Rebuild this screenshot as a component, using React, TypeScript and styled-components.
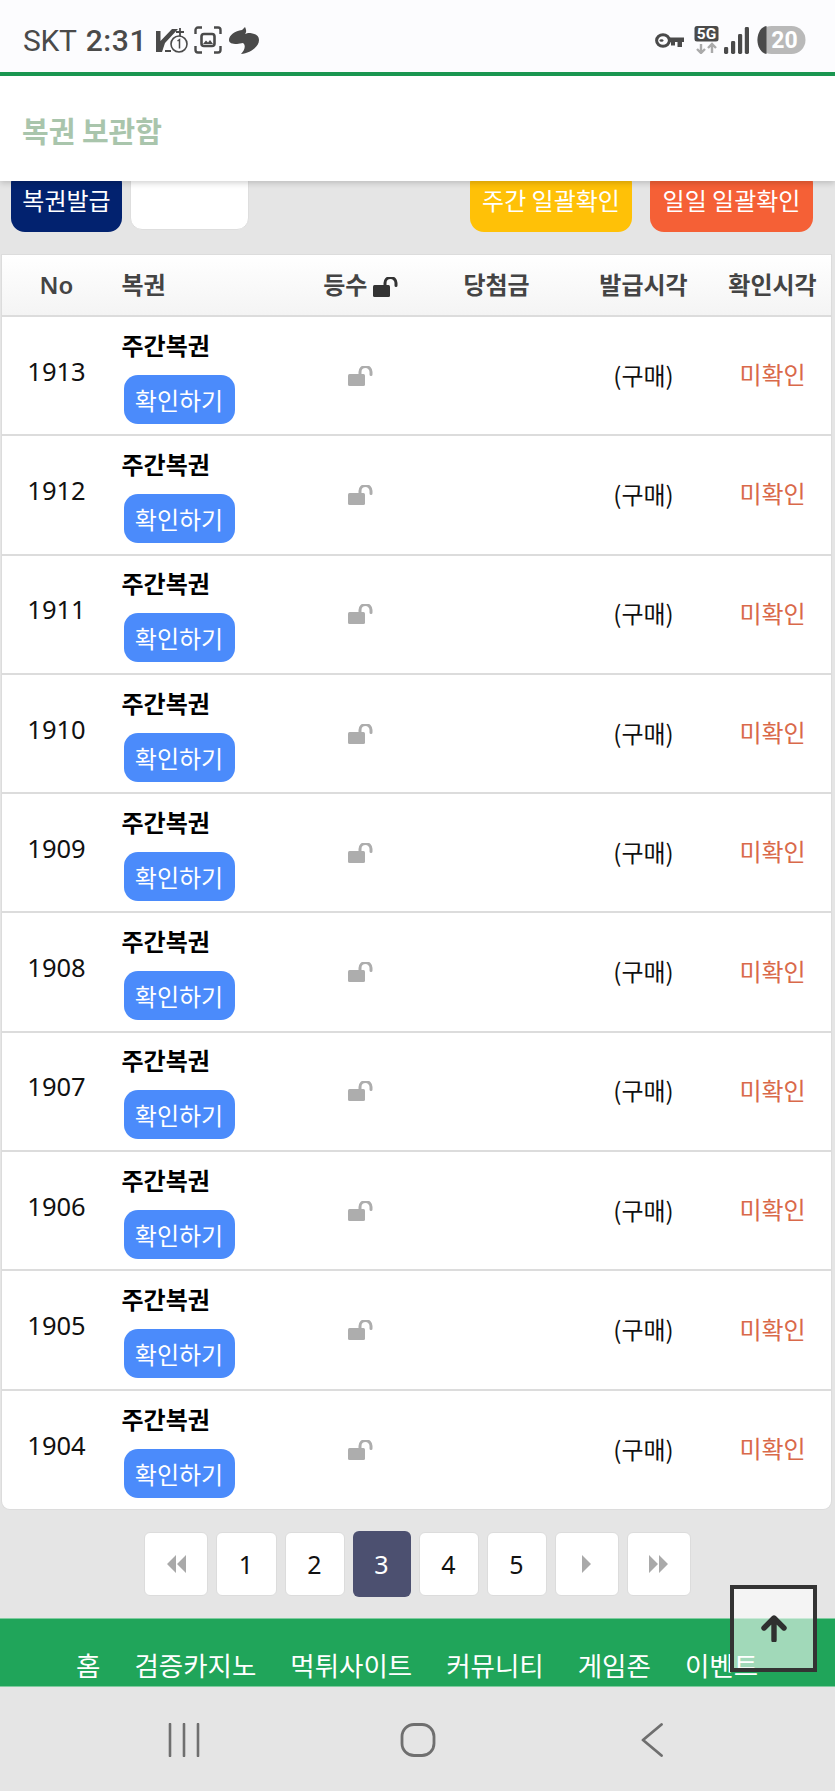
import React from "react";
import styled, { createGlobalStyle } from "styled-components";

const Global = createGlobalStyle`
  html, body { margin: 0; padding: 0; background: #e5e5e5; }
  body { font-family: "Noto Sans", "Noto Sans CJK KR", sans-serif; }
  * { box-sizing: border-box; }
`;

const Page = styled.div`
  position: relative;
  width: 835px;
  height: 1791px;
  overflow: hidden;
  background: #e5e5e5;
  display: flex;
  flex-direction: column;
`;

const StatusBar = styled.div`
  height: 76px;
  flex: none;
  background: #fcfcfe;
  border-bottom: 4px solid #1a9650;
  padding: 8px 29px 0 23px;
  display: flex;
  align-items: center;
  justify-content: space-between;
  color: #4a4a4a;
  position: relative;
  z-index: 3;
`;

const StatusLeft = styled.div`
  display: flex;
  align-items: center;
`;

const StatusRight = styled.div`
  display: flex;
  align-items: center;
`;

const Carrier = styled.span`
  font: 400 30px "Roboto", sans-serif;
  letter-spacing: -0.3px;
  margin-right: 9px;
`;

const Clock = styled.span`
  font: 500 30px "Roboto", sans-serif;
  letter-spacing: 0.6px;
  margin-right: 9px;
`;

const AppHeader = styled.header`
  height: 105px;
  flex: none;
  background: #fff;
  box-shadow: 0 2px 6px rgba(0, 0, 0, 0.18);
  padding-left: 22px;
  display: flex;
  align-items: center;
  position: relative;
  z-index: 2;
`;

const Title = styled.h1`
  margin: 2px 0 0;
  font: 700 29px "Noto Sans CJK KR", sans-serif;
  color: #a9c5ac;
`;

const Toolbar = styled.div`
  display: flex;
  margin-top: -12px;
  padding: 0 22px 0 11px;
  align-items: flex-start;
`;

const ToolButton = styled.div<{ $bg: string; $w: number; $ml?: number }>`
  width: ${(p) => p.$w}px;
  height: 63px;
  margin-left: ${(p) => p.$ml ?? 0}px;
  padding-bottom: 3px;
  background: ${(p) => p.$bg};
  border-radius: 14px;
  color: #fff;
  font: 400 24px "Noto Sans CJK KR", sans-serif;
  display: flex;
  align-items: center;
  justify-content: center;
`;

const BlankInput = styled.div`
  width: 119px;
  height: 61px;
  margin-left: 8px;
  background: #fff;
  border: 1px solid #dedede;
  border-radius: 12px;
`;

const Table = styled.table`
  width: 829px;
  margin: 23px 0 0 1.5px;
  flex: none;
  table-layout: fixed;
  border-collapse: separate;
  border-spacing: 0;
  background: #fff;
  border-radius: 0 0 8px 8px;
  box-shadow: 0 0 0 1px #dcdcdc;
`;

const HeadCell = styled.th<{ $w: number; $left?: boolean }>`
  width: ${(p) => p.$w}px;
  height: 62px;
  padding: 0 0 3px ${(p) => (p.$left ? "10px" : "0")};
  text-align: ${(p) => (p.$left ? "left" : "center")};
  font: 700 24px "Noto Sans CJK KR", sans-serif;
  color: #444;
  background: linear-gradient(#fff, #f4f4f4);
  border-bottom: 2px solid #dcdcdc;
`;

const NoHead = styled.span`
  font: 600 24px "Noto Sans", sans-serif;
`;

const Cell = styled.td<{ $left?: boolean; $last?: boolean; $pb?: number; $pt?: number }>`
  height: ${(p) => (p.$last ? 118 : 119.3)}px;
  padding: ${(p) => p.$pt ?? 0}px 0 ${(p) => p.$pb ?? 0}px ${(p) => (p.$left ? "10px" : "0")};
  text-align: ${(p) => (p.$left ? "left" : "center")};
  vertical-align: middle;
  border-bottom: ${(p) => (p.$last ? "none" : "2px solid #dcdcdc")};
  font: 400 24px "Noto Sans CJK KR", sans-serif;
  color: #111;
`;

const NoText = styled.span`
  font: 400 25.5px "Noto Sans", sans-serif;
`;

const TicketName = styled.div`
  font: 700 24px "Noto Sans CJK KR", sans-serif;
  color: #000;
  line-height: 30px;
  margin: -2px 0 15px;
`;

const CheckButton = styled.div`
  width: 111px;
  height: 49px;
  margin-left: 2px;
  border-radius: 14px;
  background: #4b8bfb;
  color: #fff;
  font: 400 24px "Noto Sans CJK KR", sans-serif;
  display: flex;
  align-items: center;
  justify-content: center;
`;

const Unchecked = styled.span`
  color: #d9694a;
`;

const Pager = styled.nav`
  display: flex;
  align-items: center;
  justify-content: center;
  gap: 8px;
  margin: 22px 0 0 -1px;
  height: 66px;
  flex: none;
`;

const PageButton = styled.div<{ $w: number; $active?: boolean }>`
  width: ${(p) => p.$w}px;
  height: ${(p) => (p.$active ? 66 : 64)}px;
  background: ${(p) => (p.$active ? "#4c5070" : "#fff")};
  color: ${(p) => (p.$active ? "#fff" : "#111")};
  border: ${(p) => (p.$active ? "none" : "1px solid #dcdcdc")};
  border-radius: 6px;
  font: 400 25px "Noto Sans", sans-serif;
  display: flex;
  align-items: center;
  justify-content: center;
`;

const FooterNav = styled.footer`
  height: 69px;
  margin-top: 21px;
  flex: none;
  background: #20a55a;
  border-top: 1px solid #7fcb9f;
  border-bottom: 1px solid #7fcb9f;
  padding: 26px 0 0 76px;
  display: flex;
  gap: 34px;
  color: #fff;
  font: 400 26.5px/40px "Noto Sans CJK KR", sans-serif;
  white-space: nowrap;
  overflow: hidden;
`;

const TopButton = styled.div`
  position: absolute;
  left: 730px;
  top: 1585px;
  width: 87px;
  height: 87px;
  border: 4px solid #333;
  background: rgba(255, 255, 255, 0.58);
  display: flex;
  justify-content: center;
  padding-top: 26px;
`;

const SystemNav = styled.div`
  flex: 1;
  display: grid;
  grid-template-columns: 168px 32px 200px 36px 205px 22px;
  padding-top: 36px;
  align-items: start;
`;

const NavSlot = styled.div<{ $col: number }>`
  grid-column: ${(p) => p.$col};
  display: flex;
`;

const Unlock = ({ size, color }: { size: number; color: string }) => (
  <svg width={size} height={size * 0.8} viewBox="0 0 25 20" style={{ verticalAlign: "middle" }}>
    <rect x="0" y="8" width="17" height="12" rx="1.5" fill={color} />
    <path d="M12 9V6a5.5 5.5 0 0 1 11 0v2.5" fill="none" stroke={color} strokeWidth="3" strokeLinecap="round" />
  </svg>
);

const Tri = ({ dir, double }: { dir: "l" | "r"; double?: boolean }) => (
  <svg width={double ? 20 : 10} height="18" viewBox={double ? "0 0 20 18" : "0 0 10 18"}>
    {dir === "l" ? (
      <path d="M10 0v18L1 9zM20 0v18L11 9z" fill="#a9a9a9" />
    ) : double ? (
      <path d="M0 0v18l9-9zM10 0v18l9-9z" fill="#a9a9a9" />
    ) : (
      <path d="M0 0v18l9-9z" fill="#a9a9a9" />
    )}
  </svg>
);

const rows = [1913, 1912, 1911, 1910, 1909, 1908, 1907, 1906, 1905, 1904];
const menu = ["홈", "검증카지노", "먹튀사이트", "커뮤니티", "게임존", "이벤트"];

export default function App() {
  return (
    <Page>
      <Global />
      <StatusBar>
        <StatusLeft>
          <Carrier>SKT</Carrier>
          <Clock>2:31</Clock>
          <svg width="32" height="25" viewBox="0 0 32 25" style={{ marginRight: 6 }}>
            <path d="M0 3h4.5v10L16 1h6L9 15l-3 9H0z" fill="#4a4a4a" />
            <path d="M24 0v8M20 4h8" stroke="#4a4a4a" strokeWidth="1.8" fill="none" />
            <circle cx="23" cy="16" r="8" fill="#fcfcfe" stroke="#4a4a4a" strokeWidth="1.6" />
            <path d="M21.5 13l2-1.4v9" stroke="#4a4a4a" strokeWidth="1.5" fill="none" />
            <path d="M9 23h6" stroke="#4a4a4a" strokeWidth="2" />
          </svg>
          <svg width="28" height="28" viewBox="0 0 28 28" style={{ marginRight: 7 }}>
            <path d="M1.5 8V4a2.5 2.5 0 0 1 2.5-2.5h4M20 1.5h4A2.5 2.5 0 0 1 26.5 4v4M1.5 20v4A2.5 2.5 0 0 0 4 26.5h4M26.5 20v4a2.5 2.5 0 0 1-2.5 2.5h-4" fill="none" stroke="#4a4a4a" strokeWidth="2.4" />
            <rect x="7.5" y="8" width="13" height="12" rx="2.5" fill="none" stroke="#4a4a4a" strokeWidth="2.6" />
            <path d="M9 18l3-3.5 2 2 2-2.5 3 4z" fill="#4a4a4a" />
          </svg>
          <svg width="30" height="27" viewBox="0 0 30 27">
            <path d="M16 0L13 3C6 4 0 8 0 13c0 3 3 4 8 4l6-1c3 2 2 7-2 11 9-1 18-7 18-14 0-5-5-7-11-7l-3 1c2-2 1-5 0-7z" fill="#4a4a4a" />
          </svg>
        </StatusLeft>
        <StatusRight>
          <svg width="29" height="15" viewBox="0 0 29 15" style={{ marginRight: 10 }}>
            <ellipse cx="8" cy="7.5" rx="6.4" ry="5.8" fill="none" stroke="#4a4a4a" strokeWidth="3" />
            <path d="M13 4.5h16v4.5h-2v5h-4.5V9H20v3.5h-4V9h-3z" fill="#4a4a4a" />
            <ellipse cx="6.5" cy="7.5" rx="2" ry="1.2" fill="#4a4a4a" />
          </svg>
          <svg width="25" height="28" viewBox="0 0 25 28" style={{ marginRight: 5 }}>
            <rect x="0.5" y="0" width="24" height="15.5" rx="2.5" fill="#4a4a4a" />
            <text x="12.5" y="13" textAnchor="middle" fill="#fff" fontFamily="Roboto, sans-serif" fontWeight="700" fontSize="15.5">5G</text>
            <path d="M7 18v9M3 23l4 4 4-4M18 27v-9M14 22l4-4 4 4" fill="none" stroke="#aaa" strokeWidth="2.4" />
          </svg>
          <svg width="25" height="27" viewBox="0 0 25 27" style={{ marginRight: 8 }}>
            <rect x="0" y="20" width="4.2" height="7" rx="1.4" fill="#4a4a4a" />
            <rect x="7" y="14" width="4.2" height="13" rx="1.4" fill="#4a4a4a" />
            <rect x="14" y="7" width="4.2" height="20" rx="1.4" fill="#4a4a4a" />
            <rect x="20.8" y="0" width="4.2" height="27" rx="1.4" fill="#4a4a4a" />
          </svg>
          <svg width="49" height="28" viewBox="0 0 49 28">
            <rect x="0.5" y="0" width="48" height="28" rx="14" fill="#b9b9b9" />
            <path d="M9.5 0v28C4 27 0.5 21 0.5 14S4 1 9.5 0z" fill="#4a4a4a" />
            <text x="27.5" y="22" textAnchor="middle" fill="#fff" fontFamily="Roboto, sans-serif" fontWeight="700" fontSize="23">20</text>
          </svg>
        </StatusRight>
      </StatusBar>
      <AppHeader>
        <Title>복권 보관함</Title>
      </AppHeader>
      <Toolbar>
        <ToolButton $bg="#02226f" $w={111}>복권발급</ToolButton>
        <BlankInput />
        <ToolButton $bg="#ffc107" $w={162} $ml={221}>주간 일괄확인</ToolButton>
        <ToolButton $bg="#f56036" $w={163} $ml={18}>일일 일괄확인</ToolButton>
      </Toolbar>
      <Table>
        <thead>
          <tr>
            <HeadCell $w={110}><NoHead>No</NoHead></HeadCell>
            <HeadCell $w={189} $left>복권</HeadCell>
            <HeadCell $w={120}>
              등수 <Unlock size={25} color="#333" />
            </HeadCell>
            <HeadCell $w={152}>당첨금</HeadCell>
            <HeadCell $w={142}>발급시각</HeadCell>
            <HeadCell $w={116}>확인시각</HeadCell>
          </tr>
        </thead>
        <tbody>
          {rows.map((n, i) => {
            const last = i === rows.length - 1;
            return (
              <tr key={n}>
                <Cell $last={last} $pb={11}><NoText>{n}</NoText></Cell>
                <Cell $left $last={last} $pt={4}>
                  <TicketName>주간복권</TicketName>
                  <CheckButton>확인하기</CheckButton>
                </Cell>
                <Cell $last={last} $pb={8}><Unlock size={25} color="#adadad" /></Cell>
                <Cell $last={last} />
                <Cell $last={last} $pb={3}>(구매)</Cell>
                <Cell $last={last} $pb={4}><Unchecked>미확인</Unchecked></Cell>
              </tr>
            );
          })}
        </tbody>
      </Table>
      <Pager>
        <PageButton $w={64}><Tri dir="l" double /></PageButton>
        <PageButton $w={61}>1</PageButton>
        <PageButton $w={60}>2</PageButton>
        <PageButton $w={58} $active>3</PageButton>
        <PageButton $w={60}>4</PageButton>
        <PageButton $w={60}>5</PageButton>
        <PageButton $w={64}><Tri dir="r" /></PageButton>
        <PageButton $w={64}><Tri dir="r" double /></PageButton>
      </Pager>
      <FooterNav>
        {menu.map((m) => (
          <span key={m}>{m}</span>
        ))}
      </FooterNav>
      <SystemNav>
        <NavSlot $col={2}>
          <svg width="32" height="34" viewBox="0 0 32 34">
            <path d="M2 1v32M16 1v32M30 1v32" stroke="#6f6f6f" strokeWidth="2.6" strokeLinecap="round" />
          </svg>
        </NavSlot>
        <NavSlot $col={4}>
          <svg width="36" height="34" viewBox="0 0 36 34">
            <rect x="2" y="1.5" width="32" height="31" rx="12" fill="none" stroke="#6f6f6f" strokeWidth="2.8" />
          </svg>
        </NavSlot>
        <NavSlot $col={6}>
          <svg width="22" height="34" viewBox="0 0 22 34">
            <path d="M20.5 1.5L2 17l18.5 15.5" fill="none" stroke="#6f6f6f" strokeWidth="2.8" strokeLinecap="round" strokeLinejoin="round" />
          </svg>
        </NavSlot>
      </SystemNav>
      <TopButton>
        <svg width="26" height="27" viewBox="0 0 26 27">
          <path d="M13 25V4M3 13l10-10 10 10" fill="none" stroke="#2f2f2f" strokeWidth="5.4" strokeLinecap="round" strokeLinejoin="round" />
        </svg>
      </TopButton>
    </Page>
  );
}
